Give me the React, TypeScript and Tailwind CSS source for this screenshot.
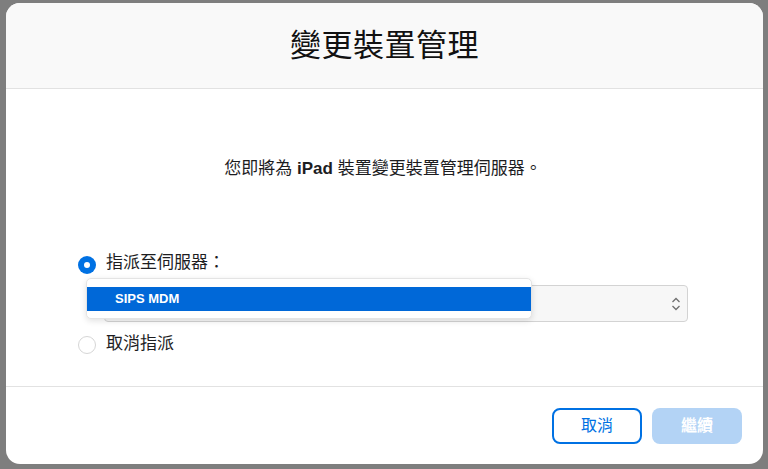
import React from "react";

const font = "font-['Liberation_Sans','Noto_Sans_CJK_TC',sans-serif]";

const Radio = ({ checked }: { checked: boolean }) =>
  checked ? (
    <span className="w-[18px] h-[18px] rounded-full bg-[#0071e3] flex items-center justify-center shrink-0">
      <span className="block w-[6px] h-[6px] rounded-full bg-white" />
    </span>
  ) : (
    <span className="block w-[18px] h-[18px] rounded-full border border-[#d6d6d6] bg-white shrink-0" />
  );

const App = () => {
  return (
    <div className={`w-[768px] h-[469px] bg-[#7e7e7e] pl-[6px] pt-[3px] ${font}`}>
      <div className="w-[757px] h-[461px] bg-white rounded-[14px] overflow-hidden flex flex-col">
        {/* Header */}
        <div className="h-[86px] bg-[#f9f9f9] border-b border-[#e2e2e2] flex items-center justify-center">
          <h1 className="text-[31px] text-[#111] tracking-[0.5px] pt-[2px]">變更裝置管理</h1>
        </div>

        {/* Body */}
        <div className="flex-1 pl-[72px] pr-[75px] pt-[68px]">
          <p className="text-center text-[17px] leading-[24px] text-[#1d1d1f]">
            您即將為 <span className="font-bold">iPad</span> 裝置變更裝置管理伺服器。
          </p>

          <div className="mt-[70px] flex flex-col">
            <label className="flex items-center gap-[10px] h-[24px]">
              <span className="block mt-[4px]">
                <Radio checked />
              </span>
              <span className="text-[17px] text-[#1d1d1f]">指派至伺服器：</span>
            </label>

            <div className="relative ml-[26px] mt-[10px] w-[584px] h-[37px] rounded-[4px] border border-[#d3d3d3] bg-[#f7f7f7] flex items-center justify-end pr-[6px]">
              <svg width="10" height="16" viewBox="0 0 10 16" fill="none" stroke="#707070" strokeWidth="1.3">
                <path d="M1.5 6 L5 2.5 L8.5 6" />
                <path d="M1.5 10 L5 13.5 L8.5 10" />
              </svg>

              {/* Open list */}
              <div className="absolute left-[-19px] top-[-8px] w-[446px] h-[41px] bg-white rounded-[5px] border border-[#e4e4e4] shadow-[0_2px_6px_rgba(0,0,0,0.12)] pt-[8px]">
                <div className="h-[24px] bg-[#0068d8] flex items-center pl-[28px] text-white text-[13px] font-bold">
                  SIPS MDM
                </div>
              </div>
            </div>

            <label className="flex items-center gap-[10px] h-[24px] mt-[10px]">
              <span className="block mt-[2px]">
                <Radio checked={false} />
              </span>
              <span className="text-[17px] text-[#1d1d1f]">取消指派</span>
            </label>
          </div>
        </div>

        {/* Footer */}
        <div className="h-[78px] border-t border-[#e2e2e2] flex items-center justify-end gap-[10px] pr-[21px]">
          <button className="w-[90px] h-[36px] rounded-[8px] border-2 border-[#0071e3] text-[#0071e3] text-[16px] bg-white">
            取消
          </button>
          <button className="w-[90px] h-[36px] rounded-[8px] bg-[#b3d3f5] text-white text-[16px] font-bold">
            繼續
          </button>
        </div>
      </div>
    </div>
  );
};

export default App;
